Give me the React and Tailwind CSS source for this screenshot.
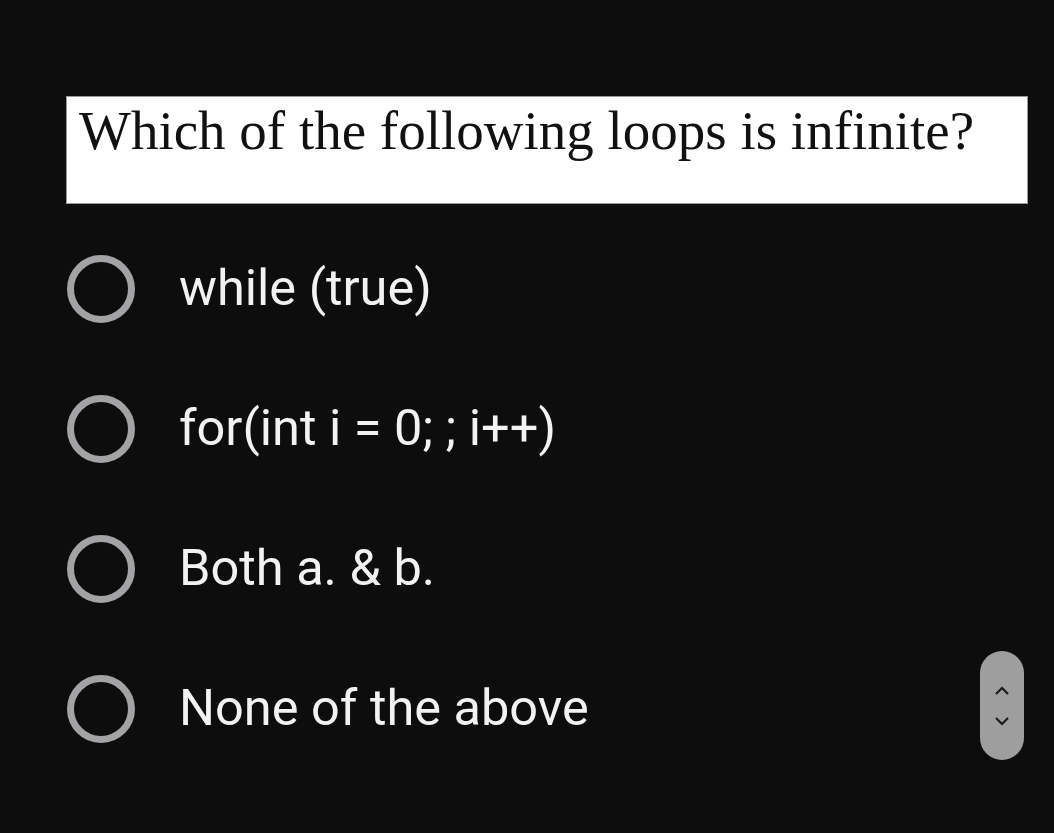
import React from "react";

const options = ["while (true)", "for(int i = 0; ; i++)", "Both a. & b.", "None of the above"];

export default function App() {
  return (
    <div className="relative w-[1054px] h-[833px] bg-[#0d0d0d] overflow-hidden">
      <div className="pt-[96px] pl-[66px]">
        <div className="w-[962px] h-[108px] bg-white border border-[#9a9a9a] pl-[12px] pt-[4px]">
          <p
            className="text-[55px] leading-[60px] text-[#111] whitespace-nowrap"
            style={{ fontFamily: '"Liberation Serif", "Times New Roman", serif' }}
          >
            Which of the following loops is infinite?
          </p>
        </div>
      </div>
      <div className="flex flex-col gap-[72px] pl-[67px] pt-[51px]">
        {options.map((o) => (
          <label key={o} className="flex items-center h-[68px]">
            <span className="w-[68px] h-[68px] rounded-full border-[7px] border-[#a3a3a6] shrink-0" />
            <span
              className="ml-[44px] text-[50.5px] text-[#f2f2f2] leading-[50px] -mt-[2px] whitespace-nowrap"
              style={{ fontFamily: 'Roboto, "Noto Sans", sans-serif' }}
            >
              {o}
            </span>
          </label>
        ))}
      </div>
      <div className="absolute left-[980px] top-[651px] w-[44px] h-[109px] rounded-full bg-[#9e9e9e] flex flex-col items-center justify-center gap-[18px]">
        <svg width="18" height="12" viewBox="0 0 18 12">
          <path d="M3 9 L9 3 L15 9" fill="none" stroke="#1a1a1a" strokeWidth="2.2" />
        </svg>
        <svg width="18" height="12" viewBox="0 0 18 12">
          <path d="M3 3 L9 9 L15 3" fill="none" stroke="#1a1a1a" strokeWidth="2.2" />
        </svg>
      </div>
    </div>
  );
}
